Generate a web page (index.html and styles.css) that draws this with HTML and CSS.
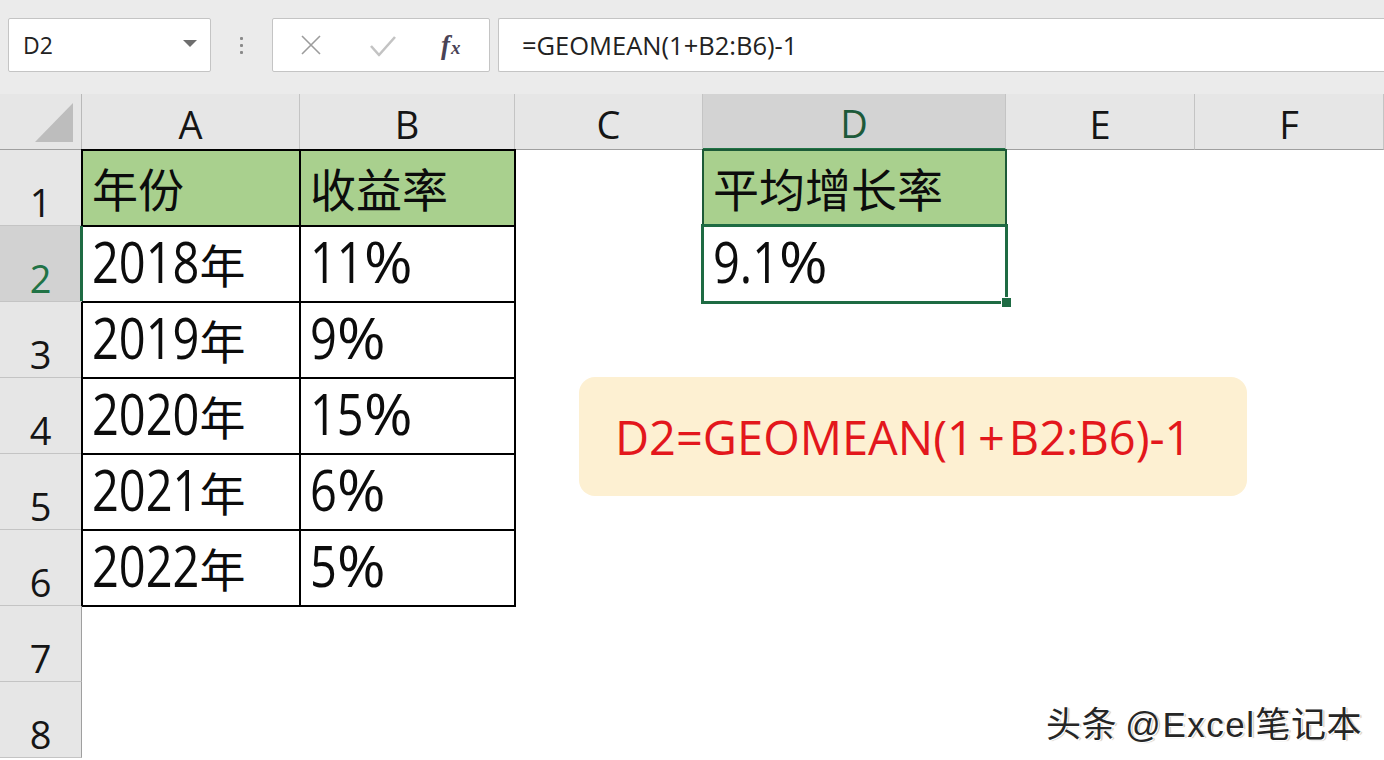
FILE: index.html
```html
<!DOCTYPE html>
<html lang="zh-CN">
<head>
<meta charset="utf-8">
<title>GEOMEAN</title>
<link rel="stylesheet" href="styles.css">
</head>
<body>
<div class="app">
  <div class="toolbar">
    <div class="namebox">
      <span class="name">D2</span>
      <svg class="caret" width="14" height="8" viewBox="0 0 14 8"><polygon points="0,0 14,0 7,7" fill="#6e6e6e"/></svg>
    </div>
    <div class="dots"><i></i><i></i><i></i></div>
    <div class="fxbox">
      <svg class="ico-x" width="22" height="22" viewBox="0 0 22 22"><path d="M2 2 L20 20 M20 2 L2 20" stroke="#9c9c9c" stroke-width="1.6" fill="none"/></svg>
      <svg class="ico-check" width="28" height="24" viewBox="0 0 28 24"><path d="M2 12 L10 21 L26 3" stroke="#c3c3c3" stroke-width="2.6" fill="none" stroke-linejoin="round"/></svg>
      <span class="fx"><i class="f">f</i><i class="x">x</i></span>
    </div>
    <div class="formula">=GEOMEAN(1+B2:B6)-1</div>
  </div>

  <div class="sheet">
    <div class="corner"><svg width="40" height="42" viewBox="0 0 40 42"><polygon points="0,41 38,41 38,2" fill="#bdbdbd"/></svg></div>
    <div class="ch">A</div>
    <div class="ch">B</div>
    <div class="ch">C</div>
    <div class="ch ch-sel">D</div>
    <div class="ch">E</div>
    <div class="ch">F</div>

    <div class="rh">1</div>
    <div class="cell tb head">年份</div>
    <div class="cell tb head">收益率</div>
    <div class="cell"></div>
    <div class="cell d1 head">平均增长率</div>
    <div class="cell"></div>
    <div class="cell"></div>

    <div class="rh rh-sel">2</div>
    <div class="cell tb"><span class="num">2018</span>年</div>
    <div class="cell tb"><span class="num">11<span class="pct">%</span></span></div>
    <div class="cell"></div>
    <div class="cell d2"><span class="num">9.1<span class="pct">%</span></span><b class="handle"></b></div>
    <div class="cell"></div>
    <div class="cell"></div>

    <div class="rh">3</div>
    <div class="cell tb"><span class="num">2019</span>年</div>
    <div class="cell tb"><span class="num">9<span class="pct">%</span></span></div>
    <div class="cell"></div>
    <div class="cell"></div>
    <div class="cell"></div>
    <div class="cell"></div>

    <div class="rh">4</div>
    <div class="cell tb"><span class="num">2020</span>年</div>
    <div class="cell tb"><span class="num">15<span class="pct">%</span></span></div>
    <div class="cell"></div>
    <div class="cell"></div>
    <div class="cell"></div>
    <div class="cell"></div>

    <div class="rh">5</div>
    <div class="cell tb"><span class="num">2021</span>年</div>
    <div class="cell tb"><span class="num">6<span class="pct">%</span></span></div>
    <div class="cell"></div>
    <div class="cell"></div>
    <div class="cell"></div>
    <div class="cell"></div>

    <div class="rh">6</div>
    <div class="cell tb"><span class="num">2022</span>年</div>
    <div class="cell tb"><span class="num">5<span class="pct">%</span></span></div>
    <div class="cell"></div>
    <div class="cell"></div>
    <div class="cell"></div>
    <div class="cell"></div>

    <div class="rh">7</div>
    <div class="cell"></div>
    <div class="cell"></div>
    <div class="cell"></div>
    <div class="cell"></div>
    <div class="cell"></div>
    <div class="cell"></div>

    <div class="rh">8</div>
    <div class="cell"></div>
    <div class="cell"></div>
    <div class="cell"></div>
    <div class="cell"></div>
    <div class="cell"></div>
    <div class="cell"></div>

    <div class="callout">D2=GEOMEAN(1<span class="plus">+</span>B2:B6)-1</div>
    <div class="watermark">头条 <span class="wm-lat">@Excel</span>笔记本</div>
  </div>
</div>
</body>
</html>
```

FILE: styles.css
```css
html, body {
  margin: 0;
  padding: 0;
  background: #ffffff;
}

body {
  width: 1384px;
  height: 760px;
  overflow: hidden;
  font-family: "Open Sans", "Noto Sans CJK SC", sans-serif;
  color: #111;
}

.app {
  width: 1384px;
  height: 760px;
  display: flex;
  flex-direction: column;
}

/* ---------- toolbar ---------- */
.toolbar {
  height: 94px;
  flex: 0 0 94px;
  box-sizing: border-box;
  background: #ebebeb;
  display: flex;
  align-items: flex-start;
  padding: 18px 0 0 8px;
}

.namebox {
  width: 203px;
  height: 54px;
  box-sizing: border-box;
  background: #fff;
  border: 1px solid #c4c4c4;
  border-radius: 2px;
  display: flex;
  align-items: center;
  justify-content: space-between;
  padding: 0 13px 0 14px;
}

.name {
  font-size: 23px;
  color: #222;
}

.caret {
  margin-top: -2px;
}

.dots {
  width: 61px;
  height: 54px;
  display: flex;
  flex-direction: column;
  align-items: center;
  justify-content: center;
  gap: 4px;
}

.dots i {
  display: block;
  width: 3px;
  height: 3px;
  background: #8a8a8a;
  border-radius: 1px;
}

.fxbox {
  width: 218px;
  height: 54px;
  box-sizing: border-box;
  background: #fff;
  border: 1px solid #c4c4c4;
  border-radius: 2px;
  display: flex;
  align-items: center;
  padding-left: 27px;
}

.ico-x {
  margin-right: 47px;
}

.ico-check {
  margin-right: 44px;
  margin-top: 2px;
}

.fx {
  font-family: "Liberation Serif", serif;
  color: #4a4356;
  display: flex;
  align-items: baseline;
}

.fx .f {
  font-size: 27px;
  font-weight: bold;
}

.fx .x {
  font-size: 19px;
  font-weight: bold;
  margin-left: 1px;
}

.formula {
  margin-left: 8px;
  flex: 1;
  height: 54px;
  box-sizing: border-box;
  background: #fff;
  border: 1px solid #c4c4c4;
  border-right: none;
  border-radius: 2px 0 0 2px;
  display: flex;
  align-items: center;
  padding-left: 23px;
  font-size: 25.5px;
  color: #222;
}

/* ---------- sheet ---------- */
.sheet {
  position: relative;
  display: grid;
  grid-template-columns: 82px 218px 215px 188px 303px 189px 189px;
  grid-template-rows: 56px repeat(8, 76px);
  background: #fff;
}

.corner {
  background: #e6e6e6;
  box-sizing: border-box;
  border-right: 1px solid #b9b9b9;
  border-bottom: 1px solid #9f9f9f;
  display: flex;
  align-items: flex-end;
  justify-content: flex-end;
  padding: 0 6px 6px 0;
}

.ch {
  background: #e6e6e6;
  box-sizing: border-box;
  border-right: 1px solid #c4c4c4;
  border-bottom: 1px solid #9f9f9f;
  font-size: 38px;
  line-height: 1;
  color: #151515;
  display: flex;
  align-items: flex-end;
  justify-content: center;
  padding-bottom: 6px;
}

.ch-sel {
  background: #d3d3d3;
  color: #1d5a3a;
  border-bottom: 2px solid #217346;
}

.rh {
  background: #e6e6e6;
  box-sizing: border-box;
  border-right: 1px solid #9f9f9f;
  border-bottom: 1px solid #c4c4c4;
  font-size: 38px;
  line-height: 1;
  color: #151515;
  display: flex;
  align-items: flex-end;
  justify-content: center;
  padding-bottom: 4px;
}

.rh-sel {
  position: relative;
  background: #d2d2d2;
  color: #217346;
}

.rh-sel::after {
  content: "";
  position: absolute;
  right: -2px;
  top: 0;
  bottom: 0;
  width: 3px;
  background: #1e6b43;
  z-index: 2;
}

.cell {
  box-sizing: border-box;
  font-family: "Noto Sans CJK SC", sans-serif;
  font-size: 46px;
  line-height: 1;
  color: #0c0c0c;
  padding: 14px 0 0 10px;
  white-space: nowrap;
}

.num {
  display: inline-block;
  font-family: "Open Sans", sans-serif;
  font-size: 47px;
  line-height: 1;
  transform: scaleY(1.2);
  transform-origin: 50% 89%;
}

.pct {
  display: inline-block;
  transform: scaleX(1.25);
  transform-origin: 0 50%;
  margin-right: 10px;
}

.tb {
  outline: 2px solid #000;
  outline-offset: -1px;
}

.head {
  background: #a9d08e;
}

.d1 {
  outline: 2px solid #1c5a37;
  outline-offset: -1px;
}

.d2 {
  position: relative;
  outline: 3px solid #1e6b43;
  outline-offset: -1px;
}

.handle {
  position: absolute;
  right: -6px;
  bottom: -6px;
  width: 9px;
  height: 9px;
  background: #1e6b43;
  border: 1px solid #fff;
  z-index: 3;
}

/* ---------- overlays ---------- */
.callout {
  position: absolute;
  left: 579px;
  top: 283px;
  width: 668px;
  height: 119px;
  box-sizing: border-box;
  background: #fdf0d2;
  border-radius: 16px;
  display: flex;
  align-items: center;
  padding-left: 36px;
  font-family: "Open Sans", sans-serif;
  font-size: 47px;
  color: #e3171c;
}

.plus {
  margin: 0 4px;
}

.watermark {
  position: absolute;
  right: 22px;
  bottom: 16px;
  font-family: "Noto Sans CJK SC", sans-serif;
  font-size: 35px;
  line-height: 1;
  letter-spacing: 0.5px;
  color: #262626;
  text-shadow: 1px 1px 0 #fff, -1px -1px 0 #fff, 2px 1px 1px #bbb;
}

.wm-lat {
  font-family: "Liberation Sans", sans-serif;
  letter-spacing: 1.5px;
}
```
